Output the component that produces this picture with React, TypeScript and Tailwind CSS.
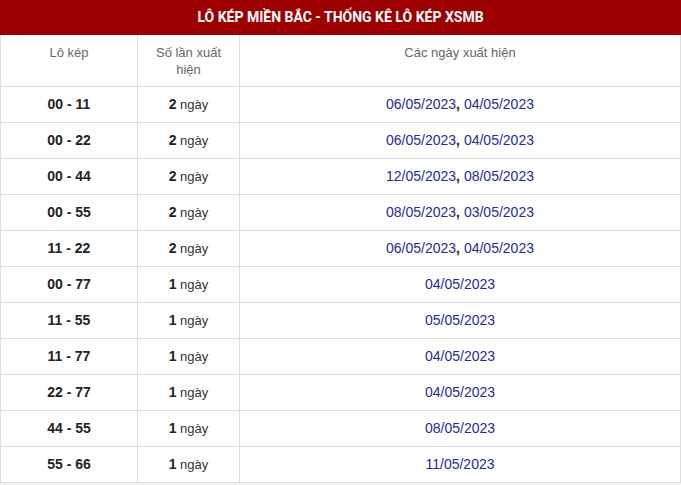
const rows: [string, number, string[]][] = [
  ["00 - 11", 2, ["06/05/2023", "04/05/2023"]],
  ["00 - 22", 2, ["06/05/2023", "04/05/2023"]],
  ["00 - 44", 2, ["12/05/2023", "08/05/2023"]],
  ["00 - 55", 2, ["08/05/2023", "03/05/2023"]],
  ["11 - 22", 2, ["06/05/2023", "04/05/2023"]],
  ["00 - 77", 1, ["04/05/2023"]],
  ["11 - 55", 1, ["05/05/2023"]],
  ["11 - 77", 1, ["04/05/2023"]],
  ["22 - 77", 1, ["04/05/2023"]],
  ["44 - 55", 1, ["08/05/2023"]],
  ["55 - 66", 1, ["11/05/2023"]],
];

export default function App() {
  return (
    <div className="min-h-screen bg-[#f2f2f2] font-['Liberation_Sans',Arial,sans-serif]">
      <div className="bg-white">
        <div className="flex h-[35px] items-center justify-center bg-[#9c0000] font-['Roboto',sans-serif] text-[14px] font-bold text-white">
          LÔ KÉP MIỀN BẮC - THỐNG KÊ LÔ KÉP XSMB
        </div>
        <table className="w-[681px] table-fixed border-collapse">
          <colgroup>
            <col className="w-[137px]" />
            <col className="w-[102px]" />
            <col />
          </colgroup>
          <thead>
            <tr className="h-[51px]">
              {["Lô kép", "Số lần xuất hiện", "Các ngày xuất hiện"].map((h, i) => (
                <th
                  key={i}
                  className="border border-[#dcdcdc] border-t-0 px-2 pt-[9px] align-top text-[13px] font-normal leading-[17px] text-[#666]"
                >
                  {h}
                </th>
              ))}
            </tr>
          </thead>
          <tbody>
            {rows.map(([pair, n, dates]) => (
              <tr key={pair} className="h-[36px]">
                <td className="border border-[#dcdcdc] text-center text-[14px] font-bold text-[#222]">
                  {pair}
                </td>
                <td className="border border-[#dcdcdc] text-center text-[13px] text-[#333]">
                  <b className="text-[14px] text-[#222]">{n}</b> ngày
                </td>
                <td className="border border-[#dcdcdc] pt-[1px] text-center text-[14px] text-[#1f2a9c]">
                  {dates.map((d, i) => (
                    <span key={d + i}>
                      {i > 0 && <b className="text-[#222]">, </b>}
                      {d}
                    </span>
                  ))}
                </td>
              </tr>
            ))}
          </tbody>
        </table>
      </div>
    </div>
  );
}
